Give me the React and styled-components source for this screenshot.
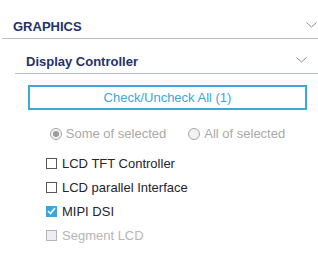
import React from "react";
import styled, { createGlobalStyle } from "styled-components";

const Global = createGlobalStyle`
  html, body {
    margin: 0;
    padding: 0;
    background: #ffffff;
    font-family: "Liberation Sans", Arial, sans-serif;
  }
`;

const Panel = styled.div`
  width: 318px;
  height: 256px;
  overflow: hidden;
  background: #fff;
`;

const HeaderRow = styled.div`
  display: flex;
  align-items: flex-end;
  justify-content: space-between;
  height: ${(p) => p.height}px;
  box-sizing: border-box;
  margin-left: ${(p) => p.indent}px;
  padding: 0 ${(p) => p.right}px 4px ${(p) => p.textIndent}px;
  border-bottom: 1px solid #b9c1cb;
`;

const HeaderTitle = styled.span`
  font-size: 13px;
  line-height: 15px;
  font-weight: 700;
  color: #25316a;
`;

const ChevronWrap = styled.span`
  display: flex;
  margin-bottom: ${(p) => p.drop}px;
`;

const Body = styled.div`
  padding: 11px 11px 0 28px;
`;

const Button = styled.button`
  display: block;
  width: 279px;
  height: 25px;
  box-sizing: border-box;
  border: 2px solid #3aa8dd;
  background: #fff;
  color: #3ea6da;
  font-family: "Liberation Sans", Arial, sans-serif;
  font-size: 13px;
  padding: 0;
  margin: 0;
`;

const RadioRow = styled.div`
  display: flex;
  justify-content: center;
  gap: 22px;
  margin-top: 16px;
  height: 15px;
`;

const RadioItem = styled.label`
  display: flex;
  align-items: center;
  gap: 4px;
  font-size: 13px;
  line-height: 15px;
  color: #a9a9a9;
`;

const RadioDot = styled.span`
  width: 12px;
  height: 12px;
  box-sizing: border-box;
  border-radius: 50%;
  border: 1px solid #a6a6a6;
  background: #f2f2f2;
  display: flex;
  align-items: center;
  justify-content: center;
  &::after {
    content: "";
    width: 6px;
    height: 6px;
    border-radius: 50%;
    background: ${(p) => (p.checked ? "#9a9a9a" : "transparent")};
  }
`;

const CheckList = styled.div`
  margin: 10px 0 0 18px;
  display: flex;
  flex-direction: column;
`;

const CheckRow = styled.label`
  display: flex;
  align-items: center;
  gap: 5px;
  height: 24px;
  font-size: 13px;
  color: ${(p) => (p.disabled ? "#b6b6b6" : "#24242e")};
`;

const Box = styled.span`
  width: 11px;
  height: 11px;
  box-sizing: border-box;
  border: 1px solid
    ${(p) => (p.checked ? "#3aa6dc" : p.disabled ? "#b3b5b8" : "#555")};
  background: ${(p) =>
    p.checked ? "#3aa6dc" : p.disabled ? "#eceef1" : "#fff"};
  display: flex;
  align-items: center;
  justify-content: center;
`;

function Chevron() {
  return (
    <svg width="11" height="6" viewBox="0 0 11 6">
      <polyline
        points="0.5,0.5 5.5,5 10.5,0.5"
        fill="none"
        stroke="#8a8a8a"
        strokeWidth="1"
      />
    </svg>
  );
}

const items = [
  { label: "LCD TFT Controller" },
  { label: "LCD parallel Interface" },
  { label: "MIPI DSI", checked: true },
  { label: "Segment LCD", disabled: true },
];

export default function App() {
  return (
    <Panel>
      <Global />
      <HeaderRow height={39} indent={2} textIndent={11} right={1}>
        <HeaderTitle>GRAPHICS</HeaderTitle>
        <ChevronWrap drop={6}>
          <Chevron />
        </ChevronWrap>
      </HeaderRow>
      <HeaderRow height={35} indent={15} textIndent={11} right={11}>
        <HeaderTitle>Display Controller</HeaderTitle>
        <ChevronWrap drop={6}>
          <Chevron />
        </ChevronWrap>
      </HeaderRow>
      <Body>
        <Button>Check/Uncheck All (1)</Button>
        <RadioRow>
          <RadioItem>
            <RadioDot checked />
            Some of selected
          </RadioItem>
          <RadioItem>
            <RadioDot />
            All of selected
          </RadioItem>
        </RadioRow>
        <CheckList>
          {items.map((it) => (
            <CheckRow key={it.label} disabled={it.disabled}>
              <Box checked={it.checked} disabled={it.disabled}>
                {it.checked && (
                  <svg width="9" height="8" viewBox="0 0 9 8">
                    <polyline
                      points="1,4 3.5,6.5 8,1"
                      fill="none"
                      stroke="#fff"
                      strokeWidth="1.6"
                    />
                  </svg>
                )}
              </Box>
              {it.label}
            </CheckRow>
          ))}
        </CheckList>
      </Body>
    </Panel>
  );
}
